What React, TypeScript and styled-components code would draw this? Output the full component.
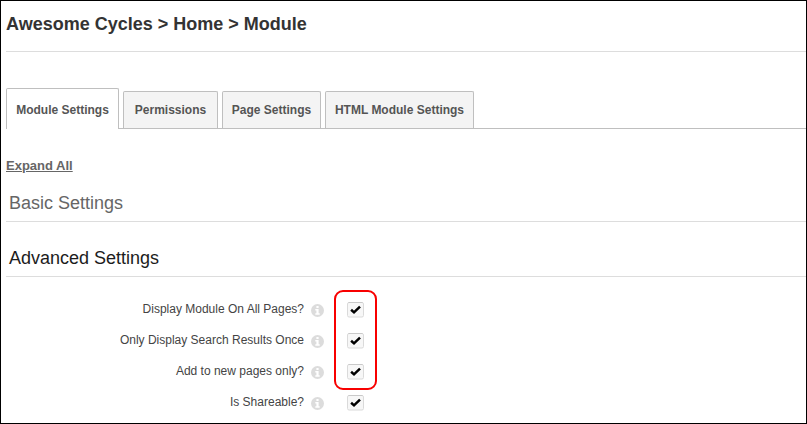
import React from "react";
import styled, { createGlobalStyle } from "styled-components";

const GlobalStyle = createGlobalStyle`
  * { box-sizing: border-box; }
  body { margin: 0; background: #fff; }
`;

const Page = styled.main`
  width: 807px;
  height: 424px;
  padding-left: 5px;
  border: 1px solid #000;
  background: #fff;
  overflow: hidden;
  font-family: "Liberation Sans", Arial, sans-serif;
  color: #444;
`;

const Title = styled.h1`
  height: 51px;
  margin: 0 0 36px;
  padding-top: 12px;
  border-bottom: 1px solid #ddd;
  font-size: 18px;
  line-height: 22px;
  font-weight: bold;
  color: #333;
`;

const TabBar = styled.nav`
  display: flex;
  align-items: flex-end;
  gap: 4px;
  height: 41px;
  border-bottom: 1px solid #bfbfbf;
`;

const Tab = styled.button<{ $width: number; $active?: boolean }>`
  width: ${(p) => p.$width}px;
  height: ${(p) => (p.$active ? 41 : 37)}px;
  margin: 0 0 ${(p) => (p.$active ? -1 : 0)}px;
  padding: ${(p) => (p.$active ? 14 : 11)}px 0 0;
  display: flex;
  justify-content: center;
  align-items: flex-start;
  border: 1px solid #bfbfbf;
  border-bottom: 0;
  border-radius: 2px 2px 0 0;
  background: ${(p) => (p.$active ? "#fff" : "#f4f4f4")};
  font: bold 12px/14px "Liberation Sans", Arial, sans-serif;
  color: #555;
  white-space: nowrap;
`;

const ExpandAll = styled.a`
  display: block;
  width: max-content;
  margin-top: 29px;
  font-size: 13px;
  line-height: 15px;
  font-weight: bold;
  text-decoration: underline;
  color: #666;
`;

const SectionHeading = styled.h2<{ $open?: boolean }>`
  height: 30px;
  margin: ${(p) => (p.$open ? 25 : 19)}px 0 0;
  padding-left: 3px;
  border-bottom: 1px solid #ddd;
  font-size: 18px;
  line-height: 22px;
  font-weight: normal;
  color: ${(p) => (p.$open ? "#1c1c1c" : "#666")};
`;

const Fields = styled.div`
  position: relative;
  padding-top: 17px;
`;

const Field = styled.label`
  display: grid;
  grid-template-columns: 298px 20px 40px;
  height: 31px;
  align-items: start;
`;

const FieldName = styled.span`
  padding-top: 8px;
  text-align: right;
  font-size: 12px;
  line-height: 14px;
`;

const Info = styled.svg`
  width: 13px;
  height: 13px;
  margin: 10px 0 0 7px;
`;

const CheckBox = styled.svg`
  width: 17px;
  height: 16px;
  margin: 8px 0 0 23px;
`;

const Highlight = styled.div`
  position: absolute;
  left: 328px;
  top: 13px;
  width: 43px;
  height: 100px;
  border: 2px solid #f80000;
  border-radius: 9px;
  pointer-events: none;
`;

const tabs = [
  { name: "Module Settings", width: 113, active: true },
  { name: "Permissions", width: 95 },
  { name: "Page Settings", width: 99 },
  { name: "HTML Module Settings", width: 149 },
];

const fields = [
  "Display Module On All Pages?",
  "Only Display Search Results Once",
  "Add to new pages only?",
  "Is Shareable?",
];

function InfoIcon() {
  return (
    <Info viewBox="0 0 13 13">
      <circle cx="6.5" cy="6.5" r="6.5" fill="#dcdcdc" />
      <path d="M5.4 2h2.2v2H5.4zM4.3 5h3.3v4.3h1.1v1.5H4.3V9.3h1.1V6.4H4.3z" fill="#fff" />
    </Info>
  );
}

function Checked() {
  return (
    <CheckBox viewBox="0 0 17 16">
      <rect x="0.5" y="0.5" width="16" height="14.5" rx="1.5" fill="#f7f7f7" stroke="#dadada" />
      <path d="M1.5 0.5h14" fill="none" stroke="#c9c9c9" />
      <path d="M4.1 7.8 7 10.4 13 4.6" fill="none" stroke="#000" strokeWidth="2.5" />
    </CheckBox>
  );
}

export default function App() {
  return (
    <>
      <GlobalStyle />
      <Page>
        <Title>Awesome Cycles &gt; Home &gt; Module</Title>
        <TabBar>
          {tabs.map((t) => (
            <Tab key={t.name} $width={t.width} $active={t.active}>{t.name}</Tab>
          ))}
        </TabBar>
        <ExpandAll>Expand All</ExpandAll>
        <SectionHeading>Basic Settings</SectionHeading>
        <SectionHeading $open>Advanced Settings</SectionHeading>
        <Fields>
          {fields.map((name) => (
            <Field key={name}>
              <FieldName>{name}</FieldName>
              <InfoIcon />
              <Checked />
            </Field>
          ))}
          <Highlight />
        </Fields>
      </Page>
    </>
  );
}
